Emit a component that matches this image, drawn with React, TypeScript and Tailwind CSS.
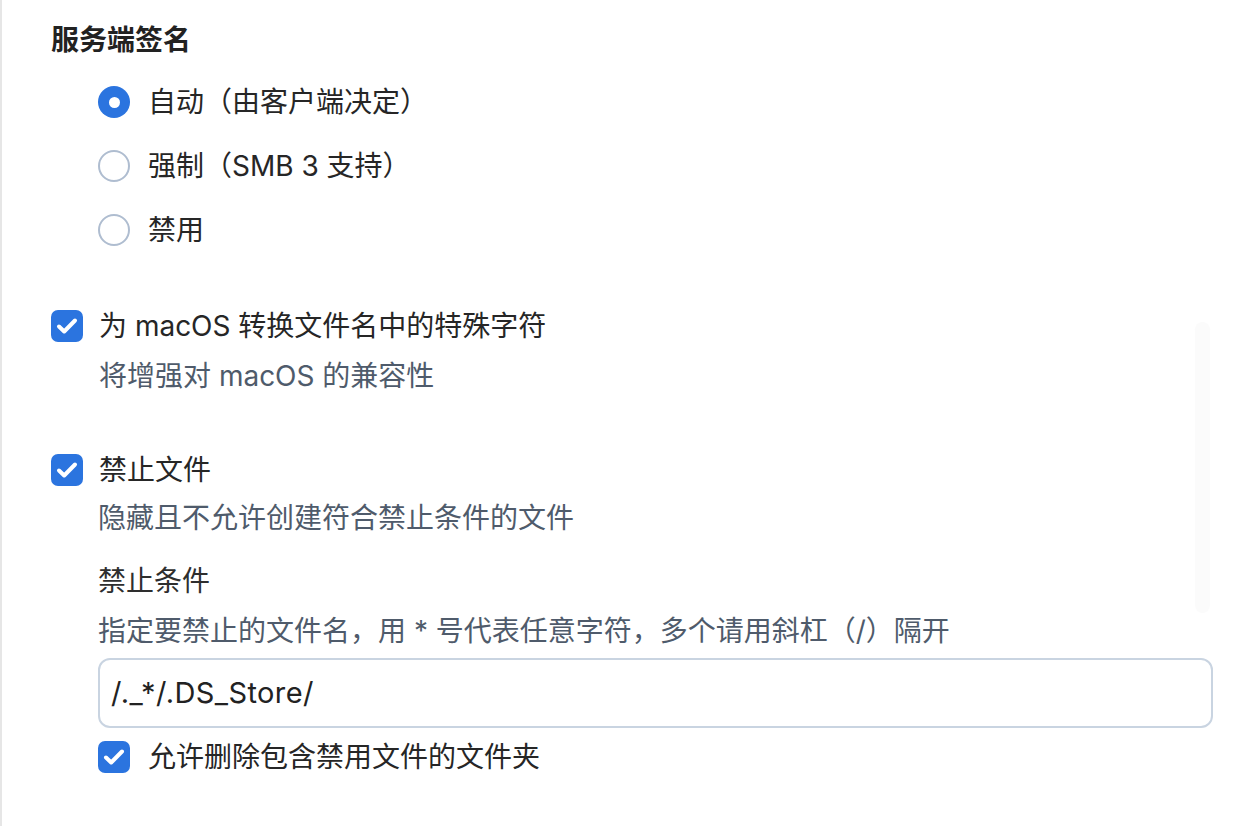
import React from "react";

const font = {
  fontFamily: '"Inter", "Noto Sans CJK SC", sans-serif',
};

function Radio({ checked, label }: { checked?: boolean; label: string }) {
  return (
    <div className="flex h-16 items-center">
      {checked ? (
        <span className="flex h-8 w-8 items-center justify-center rounded-full bg-[#2b74df]">
          <span className="h-[11px] w-[11px] rounded-full bg-white" />
        </span>
      ) : (
        <span className="h-8 w-8 rounded-full border-2 border-[#afbdd0] bg-white" />
      )}
      <span className="ml-[18px] text-[28px] leading-[40px] text-[#262626]">
        {label}
      </span>
    </div>
  );
}

function Checkbox() {
  return (
    <span className="flex h-8 w-8 shrink-0 items-center justify-center rounded-[7px] bg-[#2b74df]">
      <svg width="32" height="32" viewBox="0 0 32 32" fill="none">
        <path
          d="M8 16.5L13.2 21.5L24 10.5"
          stroke="white"
          strokeWidth="4"
          strokeLinecap="round"
          strokeLinejoin="round"
        />
      </svg>
    </span>
  );
}

export default function App() {
  return (
    <div
      className="relative h-[826px] w-[1238px] overflow-hidden border-l-2 border-[#e6e6e6] bg-white"
      style={font}
    >
      <div className="pl-[49px] pt-[20px]">
        <h2 className="text-[28px] font-semibold leading-[40px] text-[#222]">
          服务端签名
        </h2>

        <div className="mt-[10px] pl-[47px]">
          <Radio checked label="自动（由客户端决定）" />
          <Radio label="强制（SMB 3 支持）" />
          <Radio label="禁用" />
        </div>

        <div className="mt-[44px] flex h-10 items-center">
          <Checkbox />
          <span className="ml-4 text-[28px] leading-[40px] text-[#262626]">
            为 macOS 转换文件名中的特殊字符
          </span>
        </div>
        <p className="ml-[48px] mt-[10px] text-[28px] leading-[40px] text-[#4f5b6b]">
          将增强对 macOS 的兼容性
        </p>

        <div className="mt-[54px] flex h-10 items-center">
          <Checkbox />
          <span className="ml-4 text-[28px] leading-[40px] text-[#262626]">
            禁止文件
          </span>
        </div>
        <div className="ml-[47px] w-[1115px]">
          <p className="mt-2 text-[28px] leading-[40px] text-[#4f5b6b]">
            隐藏且不允许创建符合禁止条件的文件
          </p>
          <p className="mt-[23px] text-[28px] leading-[40px] text-[#2e2e2e]">
            禁止条件
          </p>
          <p className="mt-[10px] text-[28px] leading-[40px] text-[#4f5b6b]">
            指定要禁止的文件名，用 * 号代表任意字符，多个请用斜杠（/）隔开
          </p>
          <div className="mt-[7px] flex h-[70px] items-center rounded-[12px] border-2 border-[#c9d4e1] pl-[11px]">
            <span className="text-[29px] leading-[40px] tracking-[0.4px] text-[#222]">
              /._*/.DS_Store/
            </span>
          </div>
          <div className="mt-[9px] flex h-10 items-center">
            <Checkbox />
            <span className="ml-[18px] text-[28px] leading-[40px] text-[#262626]">
              允许删除包含禁用文件的文件夹
            </span>
          </div>
        </div>
      </div>

      <div className="absolute left-[1193px] top-[322px] h-[291px] w-[15px] rounded-full bg-[#fbfbfb]" />
    </div>
  );
}
